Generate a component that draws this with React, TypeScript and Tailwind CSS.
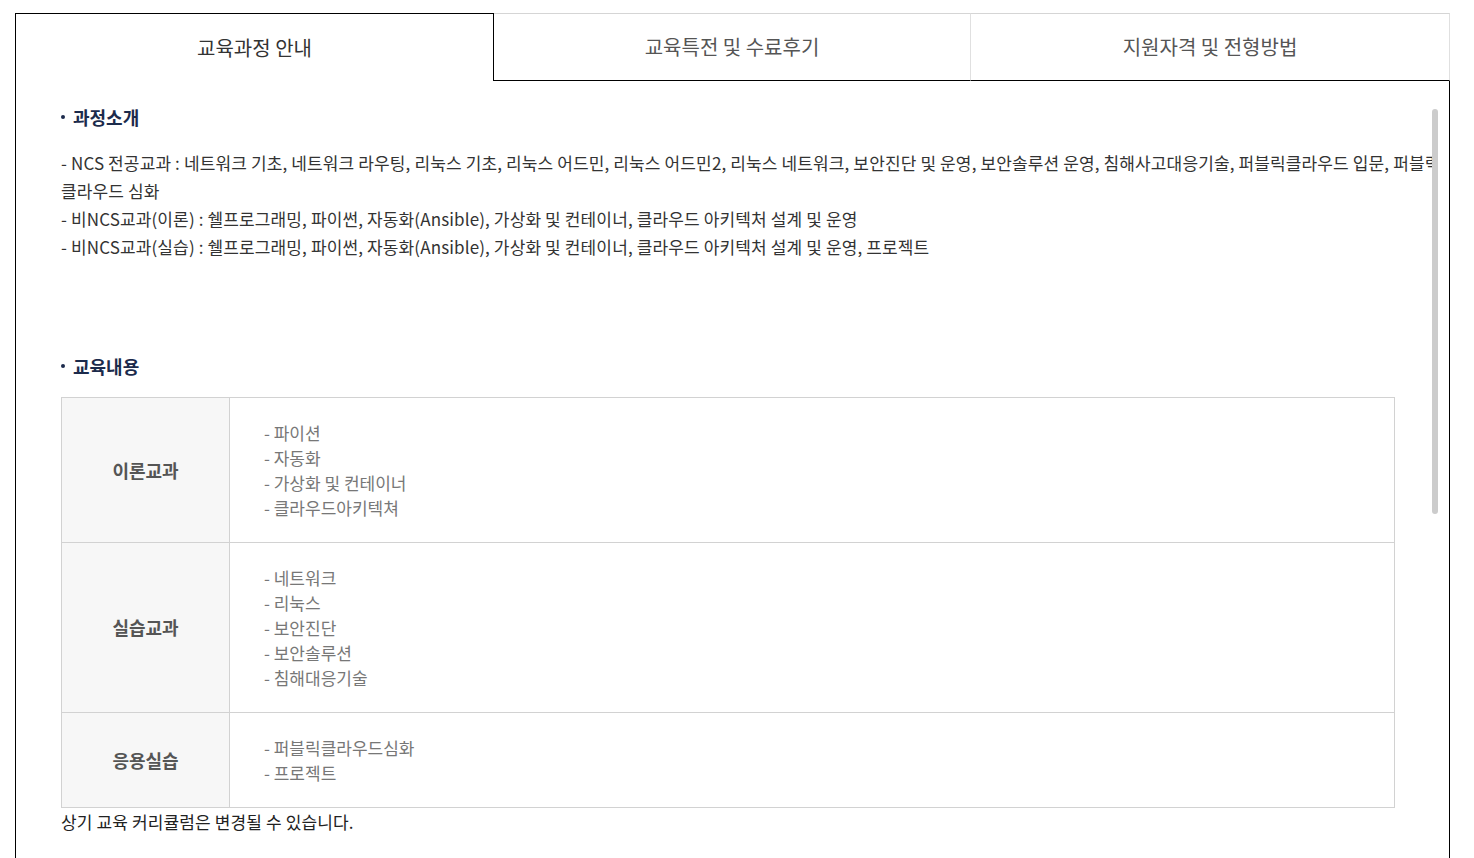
import React from 'react';

const tabs = ['교육과정 안내', '교육특전 및 수료후기', '지원자격 및 전형방법'];

const rows = [
  { label: '이론교과', items: ['파이션', '자동화', '가상화 및 컨테이너', '클라우드아키텍쳐'] },
  { label: '실습교과', items: ['네트워크', '리눅스', '보안진단', '보안솔루션', '침해대응기술'] },
  { label: '응용실습', items: ['퍼블릭클라우드심화', '프로젝트'] },
];

const SectionTitle: React.FC<{ title: string }> = ({ title }) => (
  <h3 className="flex items-center text-[18px] leading-[24px] font-bold text-[#1c2b4c]">
    <span className="w-[4px] h-[4px] rounded-full bg-[#1c2b4c] mr-[8px]"></span>
    {title}
  </h3>
);

const App: React.FC = () => {
  return (
    <div className="bg-white min-h-[858px] pt-[13px] pl-[15px] font-['Noto_Sans_CJK_KR','Noto_Sans',sans-serif]">
      <div className="w-[1435px]">
        {/* tabs */}
        <div className="flex h-[68px]">
          <div className="w-[479px] flex items-center justify-center border-l border-t border-r border-black text-[20px] text-[#333]">
            {tabs[0]}
          </div>
          <div className="w-[477px] flex items-center justify-center border-t border-t-[#d5d5d5] border-r border-r-[#e0e0e0] border-b border-b-black text-[20px] text-[#555]">
            {tabs[1]}
          </div>
          <div className="w-[479px] flex items-center justify-center border-t border-t-[#d5d5d5] border-r border-r-[#e0e0e0] border-b border-b-black text-[20px] text-[#555]">
            {tabs[2]}
          </div>
        </div>

        {/* content */}
        <div className="flex border-l border-r border-black h-[778px]">
          <div className="flex-1 overflow-hidden pl-[45px] pt-[24px]">
            <SectionTitle title="과정소개" />
            <div className="mt-[20px] text-[17px] leading-[28px] tracking-[0.13px] text-[#333]">
              <p className="whitespace-nowrap">
                - NCS 전공교과 : 네트워크 기초, 네트워크 라우팅, 리눅스 기초, 리눅스 어드민, 리눅스 어드민2, 리눅스 네트워크, 보안진단 및 운영, 보안솔루션 운영, 침해사고대응기술, 퍼블릭클라우드 입문, 퍼블릭
              </p>
              <p>클라우드 심화</p>
              <p>- 비NCS교과(이론) : 쉘프로그래밍, 파이썬, 자동화(Ansible), 가상화 및 컨테이너, 클라우드 아키텍처 설계 및 운영</p>
              <p>- 비NCS교과(실습) : 쉘프로그래밍, 파이썬, 자동화(Ansible), 가상화 및 컨테이너, 클라우드 아키텍처 설계 및 운영, 프로젝트</p>
            </div>

            <div className="mt-[93px]">
              <SectionTitle title="교육내용" />
            </div>

            <table className="mt-[19px] w-[1334px] border-collapse text-[17px]">
              <tbody>
                {rows.map((row) => (
                  <tr key={row.label}>
                    <th className="w-[168px] border border-[#d2d2d2] bg-[#f7f7f7] text-[18px] font-bold text-[#555] text-center align-middle">
                      {row.label}
                    </th>
                    <td className="border border-[#d2d2d2] py-[22px] pl-[34px] text-[#777] leading-[25px]">
                      {row.items.map((item) => (
                        <div key={item}>- {item}</div>
                      ))}
                    </td>
                  </tr>
                ))}
              </tbody>
            </table>
            <p className="text-[17px] leading-[28px] tracking-[0.13px] text-[#222]">상기 교육 커리큘럼은 변경될 수 있습니다.</p>
          </div>

          {/* scrollbar */}
          <div className="w-[17px] pt-[28px]">
            <div className="w-[6px] h-[405px] rounded-full bg-[#cccccc]"></div>
          </div>
        </div>
      </div>
    </div>
  );
};

export default App;
